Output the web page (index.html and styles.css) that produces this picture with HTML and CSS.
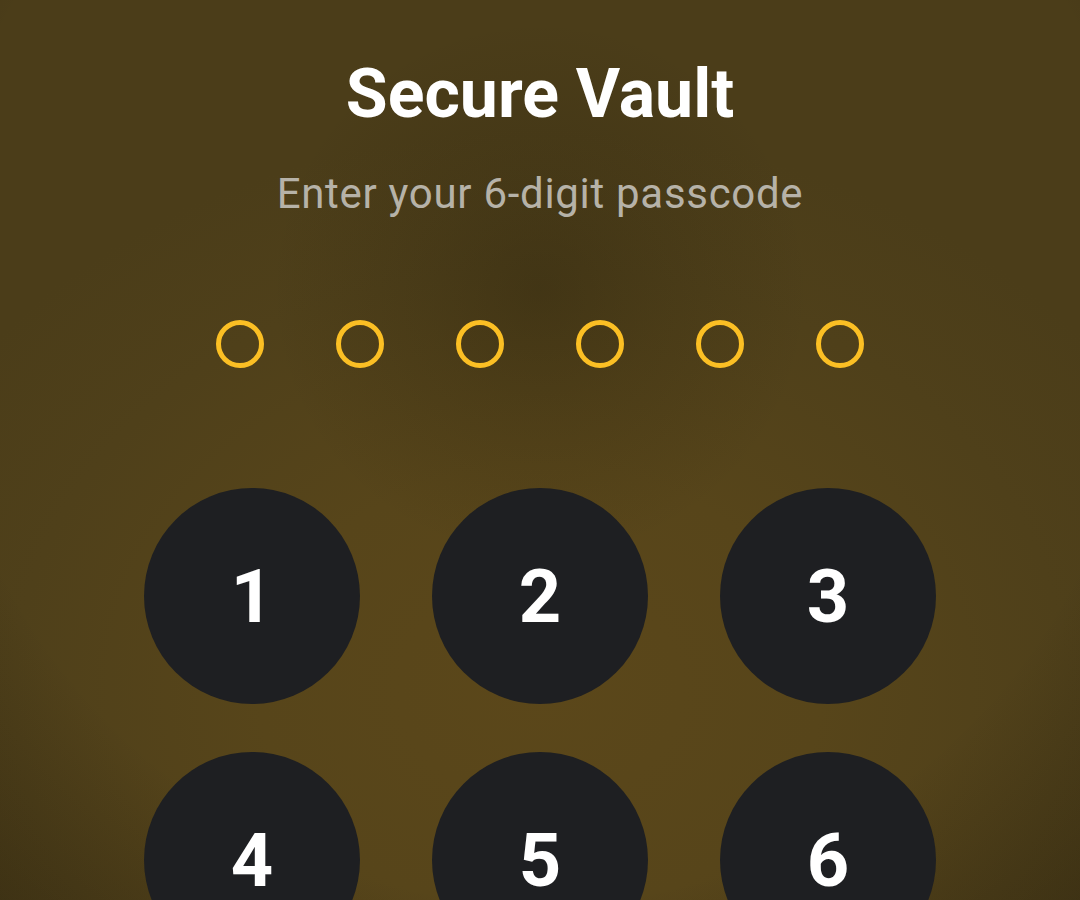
FILE: index.html
```html
<!DOCTYPE html>
<html lang="en">
<head>
<meta charset="utf-8">
<title>Secure Vault</title>
<link rel="stylesheet" href="styles.css">
</head>
<body>
<main class="screen">
  <h1 class="title">Secure Vault</h1>
  <p class="subtitle">Enter your 6-digit passcode</p>
  <div class="dots">
    <span class="dot"></span>
    <span class="dot"></span>
    <span class="dot"></span>
    <span class="dot"></span>
    <span class="dot"></span>
    <span class="dot"></span>
  </div>
  <div class="keypad">
    <button class="key">1</button>
    <button class="key">2</button>
    <button class="key">3</button>
    <button class="key">4</button>
    <button class="key">5</button>
    <button class="key">6</button>
    <button class="key">7</button>
    <button class="key">8</button>
    <button class="key">9</button>
  </div>
</main>
</body>
</html>
```

FILE: styles.css
```css
html, body {
  margin: 0;
  padding: 0;
  height: 100%;
  overflow: hidden;
}

body {
  font-family: Roboto, "Liberation Sans", sans-serif;
  background:
    radial-gradient(circle at 540px 290px, rgba(30, 24, 8, 0.28) 0px, rgba(30, 24, 8, 0.14) 120px, rgba(30, 24, 8, 0) 270px),
    radial-gradient(circle at 540px 300px, rgba(20, 15, 5, 0) 600px, rgba(20, 15, 5, 0.28) 820px),
    radial-gradient(ellipse 700px 560px at 540px 690px, #5b471a 0%, #57451a 40%, #4f401a 75%, #4b3d19 100%);
  background-color: #4b3d19;
}

.screen {
  display: flex;
  flex-direction: column;
  align-items: center;
  padding-top: 50px;
}

.title {
  margin: 0;
  color: #ffffff;
  font-size: 68px;
  font-weight: 700;
  line-height: 88px;
}

.subtitle {
  margin: 30px 0 0;
  color: #b6b2a8;
  font-size: 42px;
  font-weight: 400;
  line-height: 52px;
  letter-spacing: 0.7px;
}

.dots {
  display: flex;
  gap: 72px;
  margin-top: 100px;
}

.dot {
  width: 48px;
  height: 48px;
  box-sizing: border-box;
  border: 5px solid #fbbf24;
  border-radius: 50%;
}

.keypad {
  display: grid;
  grid-template-columns: repeat(3, 216px);
  column-gap: 72px;
  row-gap: 48px;
  margin-top: 120px;
}

.key {
  width: 216px;
  height: 216px;
  border: none;
  border-radius: 50%;
  background: #1e1f22;
  color: #ffffff;
  font-family: Roboto, "Liberation Sans", sans-serif;
  font-size: 74px;
  font-weight: 700;
  padding: 0;
  display: flex;
  align-items: center;
  justify-content: center;
}
```
